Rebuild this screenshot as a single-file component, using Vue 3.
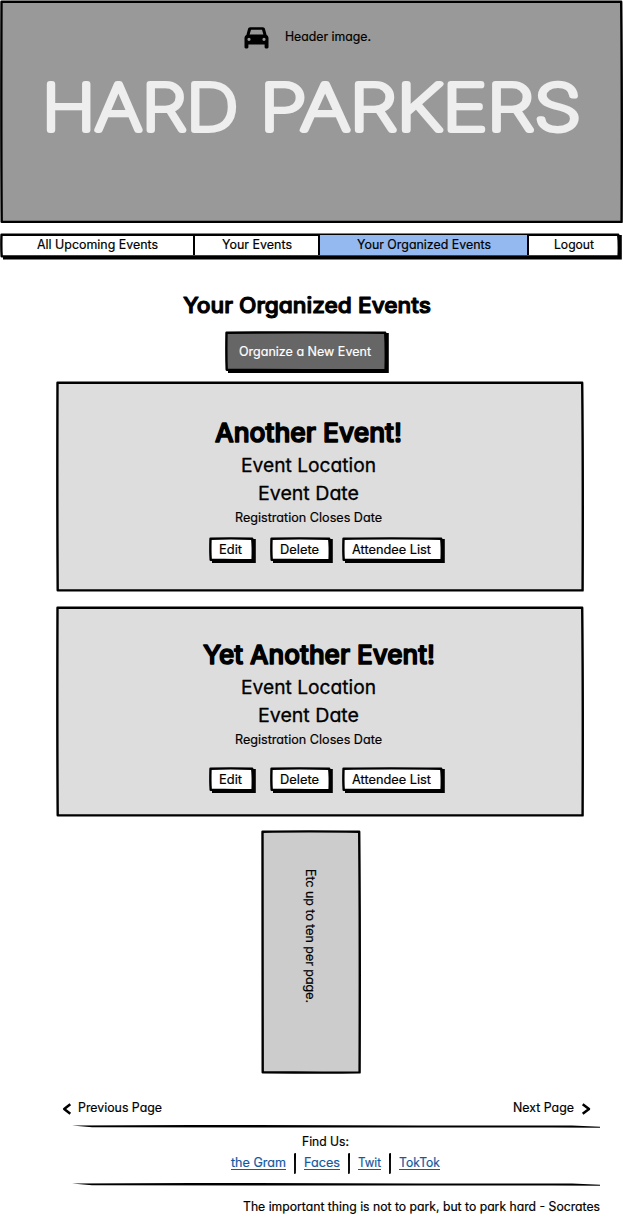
<script setup>
import { h } from 'vue'

// Single line of lettering, fitted to a given width. The baseline sits `size` px below the top.
const Lettering = (p) =>
  h('svg', { width: p.w, height: p.size + 4, style: 'display:block;overflow:visible;flex:none' }, [
    h('text', {
      x: 0,
      y: p.size,
      textLength: p.w,
      lengthAdjust: 'spacingAndGlyphs',
      'font-size': p.size === 13 ? 12.6 : p.size,
      'font-weight': p.weight || 400,
      fill: p.color || '#000',
      stroke: p.color || '#000',
      'stroke-width': p.stroke || 0.2,
      'stroke-linejoin': 'round'
    }, p.text)
  ])
Lettering.props = ['text', 'w', 'size', 'weight', 'color', 'stroke']

// Hand-drawn rectangle, with an optional hard drop shadow.
const InkBox = (p, { slots }) => {
  const { w, h: t } = p
  const d = `M1.5 1.8 Q${w * 0.4} 1.1 ${w - 1.8} 1.7 Q${w - 0.9} ${t * 0.4} ${w - 1.4} ${t - 1.6} Q${w * 0.6} ${t - 1.2} 1.7 ${t - 1.7} Q1.1 ${t * 0.6} 1.5 1.8 Z`
  const parts = []
  if (p.shadow) parts.push(h('path', { d: `M3 2 H${w + 1.8} V${t + 1.6} H3 Z`, fill: '#000' }))
  parts.push(h('path', { d, fill: p.fill || '#fff', stroke: '#000', 'stroke-width': 2.4, 'stroke-linejoin': 'round' }))
  return h('div', { style: `position:relative;box-sizing:border-box;flex:none;width:${w}px;height:${t}px` }, [
    h('svg', { width: w, height: t, style: 'position:absolute;left:0;top:0;overflow:visible;z-index:-1' }, parts),
    slots.default && slots.default()
  ])
}
InkBox.props = ['w', 'h', 'fill', 'shadow']

const tabs = [
  { text: 'All Upcoming Events', w: 121, cell: 194 },
  { text: 'Your Events', w: 70, cell: 125 },
  { text: 'Your Organized Events', w: 134, cell: 209, active: true },
  { text: 'Logout', w: 40, cell: 90 }
]
const events = [
  { title: 'Another Event!', w: 187 },
  { title: 'Yet Another Event!', w: 232, second: true }
]
const actions = [
  { text: 'Edit', w: 23, box: 45 },
  { text: 'Delete', w: 39, box: 61 },
  { text: 'Attendee List', w: 79, box: 101 }
]
const links = [
  { text: 'the Gram', w: 55 },
  { text: 'Faces', w: 36 },
  { text: 'Twit', w: 23 },
  { text: 'TokTok', w: 41 }
]
</script>

<template>
  <div class="page">
    <InkBox class="hero" :w="623" :h="223.5" fill="#999">
      <div class="caption">
        <svg width="25" height="22" viewBox="0 0 25 22">
          <path fill-rule="evenodd" d="M6.2 0.3H18.8C20 .3 20.7 1 21 2L22.6 7.9C23.8 8.6 24.5 9.7 24.5 11V20.3C24.5 22 20.6 22 20.6 20.3V17.5H4.4V20.3C4.4 22 .5 22 .5 20.3V11C.5 9.7 1.2 8.6 2.4 7.9L4 2C4.3 1 5 .3 6.2 .3ZM7 2.7L5.6 7.5H19.4L18 2.7ZM5 10.7A1.6 1.6 0 1 0 5 13.9A1.6 1.6 0 1 0 5 10.7ZM20 10.7A1.6 1.6 0 1 0 20 13.9A1.6 1.6 0 1 0 20 10.7Z" />
        </svg>
        <Lettering text="Header image." :w="86" :size="13" />
      </div>
      <div class="brand">
        <Lettering text="HARD" :w="196" :size="63" :weight="100" color="#eee" :stroke="5.8" />
        <Lettering text="PARKERS" :w="321" :size="63" :weight="100" color="#eee" :stroke="5.8" />
      </div>
    </InkBox>

    <InkBox class="nav" :w="620" :h="25" shadow="1">
      <div v-for="t in tabs" :key="t.text" class="tab" :class="{ active: t.active }" :style="{ width: t.cell + 'px' }">
        <Lettering :text="t.text" :w="t.w" :size="13" />
      </div>
    </InkBox>

    <Lettering class="heading" text="Your Organized Events" :w="248" :size="22" :weight="500" :stroke="1.1" />

    <InkBox class="organize" :w="162" :h="40.5" fill="#666" shadow="1">
      <Lettering text="Organize a New Event" :w="132" :size="13" color="#fff" />
    </InkBox>

    <InkBox v-for="e in events" :key="e.title" class="card" :class="{ second: e.second }" :w="528" :h="211" fill="#ddd">
      <Lettering class="title" :text="e.title" :w="e.w" :size="26" :weight="500" :stroke="1.5" />
      <Lettering class="place" text="Event Location" :w="135" :size="19" :stroke="0.3" />
      <Lettering class="date" text="Event Date" :w="101" :size="19" :stroke="0.3" />
      <Lettering class="closes" text="Registration Closes Date" :w="147" :size="13" />
      <div class="actions">
        <InkBox v-for="a in actions" :key="a.text" class="action" :w="a.box" :h="24.5" shadow="1">
          <Lettering :text="a.text" :w="a.w" :size="13" />
        </InkBox>
      </div>
    </InkBox>

    <InkBox class="more" :w="100" :h="244" fill="#ccc">
      <div class="turned"><Lettering text="Etc up to ten per page." :w="134" :size="13" /></div>
    </InkBox>

    <div class="pager">
      <div class="step">
        <svg width="10" height="12" viewBox="0 0 10 12"><path class="chevron" d="M8.3 1.2L2.2 6L8.3 10.8" /></svg>
        <Lettering text="Previous Page" :w="84" :size="13" />
      </div>
      <div class="step next">
        <Lettering text="Next Page" :w="61" :size="13" />
        <svg width="10" height="12" viewBox="0 0 10 12"><path class="chevron" d="M1.7 1.2L8 6L1.7 10.8" /></svg>
      </div>
    </div>

    <svg class="rule" width="528" height="4"><path d="M0 .5L120 0L350 .4L500 .6L528 1.8V2.8L480 2.5L240 2.5L20 2.2Z" /></svg>
    <Lettering class="find" text="Find Us:" :w="47" :size="13" />
    <div class="links">
      <template v-for="(l, i) in links" :key="l.text">
        <svg v-if="i" class="bar" width="2" height="21"><path d="M0 .5L2 0L1.9 20.5L.1 21Z" /></svg>
        <a class="link"><Lettering :text="l.text" :w="l.w" :size="13" color="#1459a0" /></a>
      </template>
    </div>
    <svg class="rule low" width="528" height="4"><path d="M0 .5L120 0L350 .4L500 .6L528 1.8V2.8L480 2.5L240 2.5L20 2.2Z" /></svg>
    <Lettering class="quote" text="The important thing is not to park, but to park hard - Socrates" :w="357" :size="13" />
  </div>
</template>

<style>
body {
  margin: 0;
  background: #fff;
}
</style>

<style scoped>
.page {
  width: 623px;
  height: 1218px;
  overflow: hidden;
  position: relative;
  z-index: 0;
  display: flex;
  flex-direction: column;
  font-family: Inter, "Liberation Sans", sans-serif;
  font-feature-settings: "cv11";
}
.hero,
.card,
.action,
.organize,
.more {
  z-index: 0;
}
.caption {
  display: flex;
  gap: 16px;
  padding: 27px 0 0 244px;
}
.caption > :last-child {
  margin-top: 1.3px;
}
.brand {
  display: flex;
  gap: 21.5px;
  margin: 18px 0 0 42px;
}
.nav {
  display: flex;
  margin-top: 9px;
  padding: 2.5px 1px;
  z-index: 0;
}
.tab {
  box-sizing: border-box;
  display: flex;
  justify-content: center;
  padding-top: 1px;
  border-right: 2px solid #000;
}
.tab:last-child {
  border-right: 0;
}
.active {
  background: #93b9f0;
}
.heading {
  margin: 33px 0 0 183px;
}
.organize {
  margin: 14px 0 0 225px;
  padding: 12.5px 0 0 14px;
}
.card {
  margin: 10px 0 0 56px;
  padding: 34.5px 23px 0 0;
  display: flex;
  flex-direction: column;
  align-items: center;
}
.card.second {
  margin-top: 14px;
  padding-top: 31.5px;
}
.second .title {
  margin-left: 21px;
}
.place {
  margin-top: 7.3px;
}
.date {
  margin-top: 5px;
}
.closes {
  margin-top: 5.5px;
}
.actions {
  display: flex;
  align-self: flex-start;
  margin: 11px 0 0 152.5px;
}
.second .actions {
  margin-top: 19px;
}
.action {
  display: flex;
  justify-content: center;
  padding: 3.7px 2px 0 0;
}
.action:nth-child(2) {
  margin: 0 11px 0 16px;
}
.more {
  margin: 13px 0 0 261px;
  padding: 39px 0 0 41px;
}
.turned {
  width: 17px;
  height: 134px;
}
.turned > svg {
  transform-origin: 0 0;
  transform: translateX(17px) rotate(90deg);
}
.pager {
  display: flex;
  justify-content: space-between;
  margin: 25px 32px 0 62px;
}
.step {
  display: flex;
  gap: 6px;
}
.step > svg[viewBox] {
  margin-top: 3.5px;
}
.next {
  gap: 7px;
}
.chevron {
  fill: none;
  stroke: #000;
  stroke-width: 2.5;
  stroke-linejoin: round;
}
.rule {
  display: block;
  flex: none;
  margin: 8.5px 0 0 72px;
}
.find {
  margin: 4px 0 0 302px;
}
.links {
  display: flex;
  gap: 8px;
  margin: 4px 0 0 231px;
}
.bar {
  flex: none;
  margin-top: -1px;
}
.link {
  height: 16px;
  border-bottom: 1px solid #1459a0;
  box-sizing: border-box;
}
.low {
  margin-top: 9.5px;
}
.quote {
  margin: 10.5px 0 0 243px;
}
</style>
